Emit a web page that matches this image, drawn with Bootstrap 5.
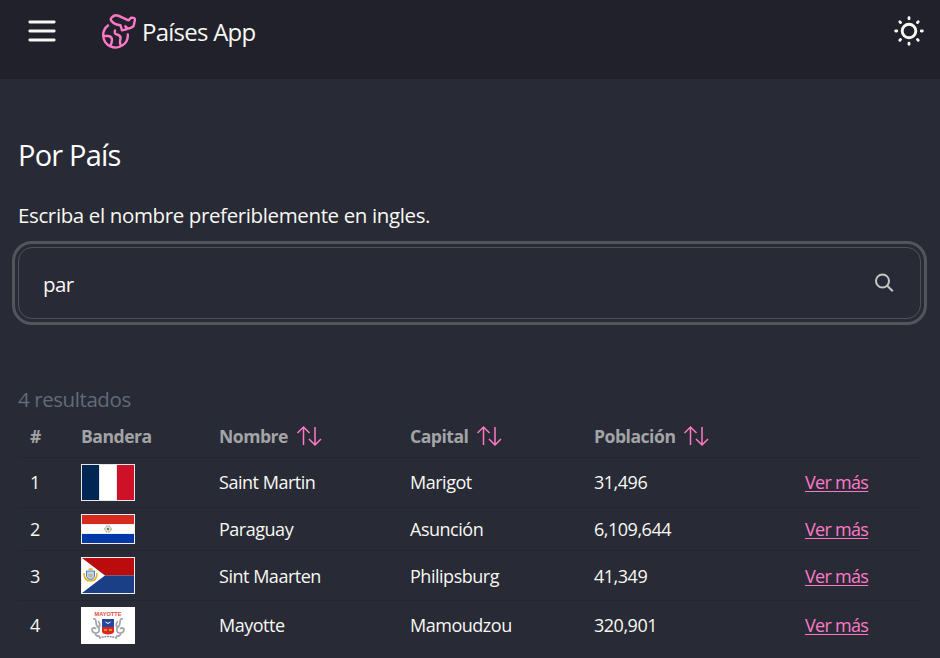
<!DOCTYPE html>
<html lang="es" data-bs-theme="dark">
<head>
<meta charset="utf-8">
<meta name="viewport" content="width=device-width, initial-scale=1">
<title>Países App</title>
<link href="https://cdn.jsdelivr.net/npm/bootstrap@5.3.0/dist/css/bootstrap.min.css" rel="stylesheet">
<style>
body{background:#282a36;color:#f8f8f2;font-family:"Open Sans","Noto Sans",sans-serif;height:658px;overflow:hidden}
.topbar{background:#21212b;height:79px;padding:0 15px 17px 28px}
.brand{margin-left:46px}
.brand-name{font-size:24px;line-height:32px;letter-spacing:-.75px;margin-left:6px;padding-top:2px}
.page{padding:58px 19px 0 18px}
.page-title{font-size:29px;line-height:36px;font-weight:400;margin:0 0 27px;letter-spacing:-.8px}
.hint{font-size:20.5px;line-height:30px;margin:0 0 17px;letter-spacing:-.37px}
.search-box{height:72px;border:1px solid #4f515a;border-radius:14px;outline:3px solid #53555d;outline-offset:3px;padding:0 26px 0 24px}
.search-box .form-control{background:transparent;color:#f8f8f2;font-size:20.5px;line-height:30px;letter-spacing:-.6px;padding-top:2px;padding-bottom:0}
.result-count{font-size:20.5px;line-height:28px;color:#636a7b;margin:66px 0 0;letter-spacing:-.42px}
.countries{table-layout:fixed;width:904px;margin:0;font-size:18px;--bs-table-bg:transparent;--bs-table-color:#f8f8f2;border-color:#23252f;color:#f8f8f2}
.countries>:not(caption)>*>*{padding:0 0 0 12px;border-bottom:1px solid #23252f;vertical-align:middle;line-height:24px;white-space:nowrap}
.countries thead th{color:#a3a4a5;font-weight:700;height:44px;font-size:17.6px;letter-spacing:-.5px;padding-top:3px}
.countries tbody tr:last-child td{border-bottom:0}
.countries td{height:50px;letter-spacing:-.48px}
.countries .short-row td{height:43px}
.countries .low-row td:not(:nth-child(2)){padding-top:2px}
.countries a{color:#ff79c6;text-underline-offset:2px;letter-spacing:-.7px}
.flag{display:block;width:54px}
.sorter{margin-left:9px;flex:none}
</style>
</head>
<body>
<nav class="topbar d-flex align-items-center">
  <svg width="28" height="24" viewBox="0 0 28 24" fill="none" stroke="#f8f8f2" stroke-width="2.800" stroke-linecap="round"><path d="M1.800 3h24.400M1.800 12h24.400M1.800 21h24.400"/></svg>
  <div class="brand d-flex align-items-center">
    <svg width="34" height="36" viewBox="102 13 34 36" fill="none" stroke="#ff79c6" stroke-width="2.400" stroke-linecap="round" stroke-linejoin="round">
      <path d="M108 25.500A12.300 12.300 0 1 0 127.800 34.500M103.500 36h4.500q4 .5 4 4q0 2.500-1.500 5.500M115 30.500q-1 3.500 2 4q4 1 3.500 4q-1 3.500 0 6.500"/>
      <path d="M111.300 20.800c-1.800-2 1.700-5.500 5-5.500c1.700 0 3 1 12.200 5l2.500-2.500q4-.5 4 2l-1.500 6.500q-2.500 2-6 2.500l-2-2.500l1 3l-4.500 1l-1.500-5c-3-.3-7-1.500-9.200-4.500z"/>
    </svg>
    <span class="brand-name">Países App</span>
  </div>
  <svg class="ms-auto" width="32" height="32" viewBox="0 0 32 32" fill="none" stroke="#f8f8f2" stroke-width="2.900" stroke-linecap="round"><circle cx="16" cy="16" r="6.800"/><path d="M16 2.700v1M16 28.300v1M2.700 16h1M28.300 16h1M6.800 6.800l.7.7M24.500 24.500l.7.7M6.800 25.200l.7-.7M24.500 7.500l.7-.7"/></svg>
</nav>
<main class="page">
  <h1 class="page-title">Por País</h1>
  <p class="hint">Escriba el nombre preferiblemente en ingles.</p>
  <div class="search-box d-flex align-items-center">
    <input class="form-control border-0 shadow-none px-0" type="text" value="par" aria-label="País">
    <svg class="flex-shrink-0" width="19" height="20" viewBox="0 0 19 20" fill="none" stroke="#c6c6c5" stroke-width="2"><circle cx="7.500" cy="8" r="6.500"/><path d="M12.200 12.700l5.600 5.600"/></svg>
  </div>
  <p class="result-count">4 resultados</p>
  <table class="table countries">
    <colgroup><col style="width:51px"><col style="width:138px"><col style="width:191px"><col style="width:184px"><col style="width:211px"><col></colgroup>
    <thead><tr>
      <th>#</th><th>Bandera</th>
      <th><div class="d-flex align-items-center">Nombre<svg class="sorter" width="26" height="22" viewBox="0 0 26 22" fill="none" stroke="#ff79c6" stroke-width="1.500"><path d="M6.500 20V2M.5 8l6-6l6 6M18 2v18M12 14l6 6l6-6"/></svg></div></th>
      <th><div class="d-flex align-items-center">Capital<svg class="sorter" width="26" height="22" viewBox="0 0 26 22" fill="none" stroke="#ff79c6" stroke-width="1.500"><path d="M6.500 20V2M.5 8l6-6l6 6M18 2v18M12 14l6 6l6-6"/></svg></div></th>
      <th><div class="d-flex align-items-center">Población<svg class="sorter" width="26" height="22" viewBox="0 0 26 22" fill="none" stroke="#ff79c6" stroke-width="1.500"><path d="M6.500 20V2M.5 8l6-6l6 6M18 2v18M12 14l6 6l6-6"/></svg></div></th>
      <th></th>
    </tr></thead>
    <tbody>
      <tr><td>1</td><td><svg class="flag" height="37" viewBox="0 0 54 37"><path fill="#e8e8e8" d="M0 0h54v37H0z"/><path fill="#002654" d="M1 1h17v35H1z"/><path fill="#fff" d="M19 1h16v35H19z"/><path fill="#ce1126" d="M36 1h17v35H36z"/></svg></td><td>Saint Martin</td><td>Marigot</td><td>31,496</td><td><a href="#">Ver más</a></td></tr>
      <tr class="short-row"><td>2</td><td><svg class="flag" height="30" viewBox="0 0 54 30"><path fill="#f0efef" d="M0 0h54v30H0z"/><path fill="#d52b1e" d="M1 1h52v9H1z"/><path fill="#fff" d="M1 11h52v8H1z"/><path fill="#0038a8" d="M1 20h52v9H1z"/><circle cx="27" cy="15" r="3.200" fill="#e8e7cf" stroke="#8d9a90" stroke-dasharray="2 1"/><circle cx="27" cy="15" r="1.200" fill="#4f8a55"/></svg></td><td>Paraguay</td><td>Asunción</td><td>6,109,644</td><td><a href="#">Ver más</a></td></tr>
      <tr class="low-row"><td>3</td><td><svg class="flag" height="37" viewBox="0 0 54 37"><path fill="#f0efef" d="M0 0h54v37H0z"/><path fill="#ba0c0c" d="M1 1h52v17.500H1z"/><path fill="#1a3f87" d="M1 18.500h52V36H1z"/><path fill="#fff" d="M1 1l23 17.500L1 36z"/><path d="M3 16q0 8 6.500 8t6.500-8" fill="none" stroke="#e6b422" stroke-width="1.600"/><path d="M5.500 14h8v5.500q-1 3-4 3t-4-3z" fill="#b9d8ee" stroke="#5b7ca4"/><path d="M7.500 17h4v3h-4z" fill="#d2a7a0"/><path d="M7 13a2.500 2 0 0 1 5 0z" fill="#edb33f"/></svg></td><td>Sint Maarten</td><td>Philipsburg</td><td>41,349</td><td><a href="#">Ver más</a></td></tr>
      <tr><td>4</td><td><svg class="flag" height="37" viewBox="0 0 54 37"><path fill="#fff" d="M0 0h54v37H0z"/><text x="13.500" y="9" font-size="5.800" font-weight="700" textLength="27" lengthAdjust="spacingAndGlyphs" letter-spacing="0" fill="#e34a3c" font-family="Liberation Sans,sans-serif">MAYOTTE</text><path fill="#24479e" d="M21 12h12v8H21z"/><path fill="#d8281f" d="M21 20h12v5q-1 2-6 2.500q-5-.5-6-2.500z"/><path d="M24.500 15q2.500 3 5 0" stroke="#fff" fill="none"/><path d="M23 23h3M28 23h3" stroke="#f0b030" stroke-width="1.500"/><path d="M12 12q3-1 3 3t3 6q1 5-3 5t-4-4q2-2 4 0M42 12q-3-1-3 3t-3 6q-1 5 3 5t4-4q-2-2-4 0M17 14q3 3 1 6M37 14q-3 3-1 6M14 26q1 4 5 3M40 26q-1 4-5 3" fill="none" stroke="#a2a5a7" stroke-width="1.700"/><path d="M18 31q9-3 18 0" fill="none" stroke="#8f9395" stroke-width="1.500" stroke-dasharray="2 .7"/></svg></td><td>Mayotte</td><td>Mamoudzou</td><td>320,901</td><td><a href="#">Ver más</a></td></tr>
    </tbody>
  </table>
</main>
<script src="https://cdn.jsdelivr.net/npm/bootstrap@5.3.0/dist/js/bootstrap.bundle.min.js"></script>
</body>
</html>
